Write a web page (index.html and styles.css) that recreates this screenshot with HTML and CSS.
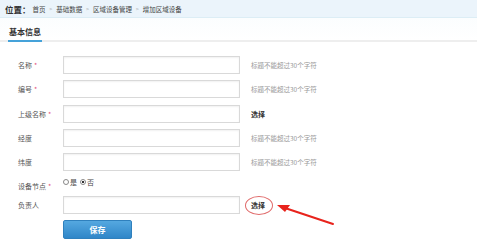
FILE: index.html
```html
<!DOCTYPE html>
<html lang="zh-CN">
<head>
  <meta charset="UTF-8">
  <title>增加区域设备</title>
  <link rel="stylesheet" href="styles.css">
</head>
<body>

  <!-- 位置 -->
  <div class="topbar">
    <span class="place">位置：</span>
    <span class="crumb">首页</span><span class="sep">&gt;</span>
    <span class="crumb">基础数据</span><span class="sep">&gt;</span>
    <span class="crumb">区域设备管理</span><span class="sep">&gt;</span>
    <span class="crumb">增加区域设备</span>
  </div>

  <div class="tabs">
    <span class="tab active">基本信息</span>
  </div>

  <div class="form">
    <div class="row">
      <label>名称<i>*</i></label>
      <input type="text" class="field">
      <span class="hint">标题不能超过30个字符</span>
    </div>
    <div class="row">
      <label>编号<i>*</i></label>
      <input type="text" class="field">
      <span class="hint">标题不能超过30个字符</span>
    </div>
    <div class="row">
      <label>上级名称<i>*</i></label>
      <input type="text" class="field">
      <a class="pick">选择</a>
    </div>
    <div class="row">
      <label>经度</label>
      <input type="text" class="field">
      <span class="hint">标题不能超过30个字符</span>
    </div>
    <div class="row">
      <label>纬度</label>
      <input type="text" class="field">
      <span class="hint">标题不能超过30个字符</span>
    </div>
    <div class="row row-radio">
      <label>设备节点<i>*</i></label>
      <div class="radios">
        <span class="radio"></span>是
        <span class="radio checked"></span>否
      </div>
    </div>
    <div class="row">
      <label>负责人</label>
      <input type="text" class="field">
      <a class="pick marked">选择</a>
    </div>
    <div class="row">
      <label></label>
      <button class="save">保存</button>
    </div>
  </div>

  <!-- 标注箭头 -->
  <svg class="arrow" width="60" height="24" viewBox="0 0 60 24">
    <path d="M58 22 L10 6" stroke="#e8231c" stroke-width="2" stroke-linecap="round" fill="none"/>
    <path d="M2 3 L15 3 L10 10 Z" fill="#e8231c"/>
  </svg>

</body>
</html>
```

FILE: styles.css
```css
* {
  box-sizing: border-box;
}

body {
  margin: 0;
  font-family: "Noto Sans CJK SC", "Noto Sans", sans-serif;
  font-size: 7px;
  color: #555;
  background: #fff;
  position: relative;
  width: 477px;
  height: 243px;
  overflow: hidden;
}

.topbar {
  height: 18px;
  background: #ebf4fb;
  border-bottom: 1px solid #dcedf5;
  display: flex;
  align-items: center;
  padding-left: 5px;
  color: #333;
}

.place {
  font-size: 8.5px;
  font-weight: bold;
  color: #333;
  margin-right: 2px;
}

.crumb {
  font-size: 6.5px;
  color: #444;
}

.sep {
  font-size: 5px;
  color: #999;
  margin: 0 4px;
}

.tabs {
  height: 24px;
  border-bottom: 2px solid #eee;
  padding-left: 8px;
  display: flex;
  align-items: flex-end;
  background: linear-gradient(#fbfdfe, #fff);
}

.tab {
  font-size: 8px;
  font-weight: bold;
  color: #333;
  padding: 0 1px 3px;
  margin-bottom: -2px;
}

.tab.active {
  border-bottom: 2px solid #45a2d9;
}

.form {
  padding-top: 14px;
  padding-left: 18px;
}

.row {
  display: flex;
  align-items: center;
  height: 18px;
  margin-bottom: 6.3px;
}

.row label {
  width: 45px;
  flex: none;
  color: #555;
}

.row label i {
  font-style: normal;
  color: #e4507a;
  margin-left: 2px;
}

.field {
  width: 177px;
  height: 18px;
  border: 1px solid #d9d9d9;
  box-shadow: inset 0 1px 2px rgba(0, 0, 0, 0.06);
  padding: 0 4px;
  margin: 0;
  outline: none;
}

.hint {
  margin-left: 11px;
  color: #999;
  font-size: 6.5px;
}

.pick {
  margin-left: 11px;
  color: #333;
  font-weight: bold;
  font-size: 7px;
  position: relative;
}

.pick.marked::after {
  content: "";
  position: absolute;
  left: -6px;
  top: -4px;
  width: 26px;
  height: 17px;
  border: 1px solid #e06a6a;
  border-radius: 50%;
}

.row-radio {
  height: 12px;
  align-items: flex-start;
}

.row-radio label {
  padding-top: 4px;
}

.radios {
  display: flex;
  align-items: center;
  color: #444;
  font-size: 7px;
}

.radio {
  display: inline-block;
  width: 6px;
  height: 6px;
  border: 1px solid #888;
  border-radius: 50%;
  margin-right: 1px;
  background: #fff;
}

.radio.checked {
  margin-left: 3px;
  background: radial-gradient(#333 40%, #fff 50%);
}

.save {
  width: 69px;
  height: 19px;
  border: 1px solid #2f80bd;
  border-radius: 2px;
  background: linear-gradient(#55a8e0, #2f86c8);
  color: #fff;
  font-family: "Noto Sans CJK SC", sans-serif;
  font-size: 8px;
  font-weight: bold;
  padding: 0;
  cursor: pointer;
}

.arrow {
  position: absolute;
  left: 275px;
  top: 202px;
}
```
